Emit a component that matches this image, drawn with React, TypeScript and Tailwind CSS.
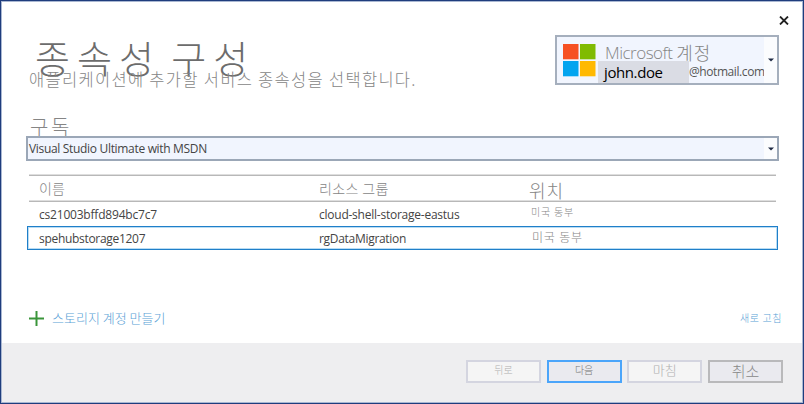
import type { ReactNode } from "react";

const ko = "font-['Noto_Sans_CJK_KR',sans-serif] font-light";
const latin = "font-['Open_Sans','Noto_Sans',sans-serif]";

function Caret() {
  return (
    <svg width="6" height="4" viewBox="0 0 6 4" className="block">
      <path d="M0 0.5H6L3 3.5Z" fill="#1f2a44" />
    </svg>
  );
}

function MicrosoftLogo() {
  return (
    <svg width="33" height="33" viewBox="0 0 33 33" className="block shrink-0">
      <rect width="15.5" height="15.3" fill="#f65022" />
      <rect x="17" width="15.5" height="15.3" fill="#80bb02" />
      <rect y="17" width="15.5" height="15.3" fill="#02a4ef" />
      <rect x="17" y="17" width="15.5" height="15.3" fill="#ffb902" />
    </svg>
  );
}

function AccountPicker() {
  return (
    <div className="flex h-[50px] w-[224px] border-2 border-[#a5afbd] bg-[#f1f5fe]">
      <div className="pt-[7px] pl-[6px]">
        <MicrosoftLogo />
      </div>
      <div className="flex w-[168px] shrink-0 flex-col pl-[2px]">
        <div className="flex h-[24px] items-end pl-[7px] whitespace-pre text-[#858585]">
          <span className={`${latin} h-[23px] text-[17px] font-light leading-[30px] tracking-[-0.5px]`}>Microsoft </span>
          <span className={`${ko} h-[23px] text-[18px] leading-[28px] tracking-[0.8px]`}>계정</span>
        </div>
        <div className="flex h-[22px]">
          <div className={`${latin} w-[91px] shrink-0 bg-[#dadce4] pl-[6px] text-[15px] leading-[23px] tracking-[-0.4px] text-black`}>
            john.doe
          </div>
          <div className={`${latin} text-[12px] leading-[21px] tracking-[-0.42px] text-[#555]`}>@hotmail.com</div>
        </div>
      </div>
      <div className="flex flex-1 items-center justify-center bg-[#fbfcfe]">
        <Caret />
      </div>
    </div>
  );
}

function FooterButton({ children, className }: { children: ReactNode; className: string }) {
  return (
    <button type="button" className={`${ko} h-[23px] w-[75px] border-2 whitespace-nowrap ${className}`}>
      {children}
    </button>
  );
}

export default function App() {
  return (
    <div className="h-[404px] w-[804px] border border-[#1f3d7d]">
      <div className="flex h-full flex-col border border-[#a9b7d2] bg-white">
        <header className="flex h-[114px] justify-between pr-[13px] pl-[27px]">
          <div className="pt-[26px]">
            <h1 className={`${ko} h-[42px] pl-[6px] text-[38px] leading-[57px] tracking-[7px] [word-spacing:-5px] whitespace-nowrap text-[#6c6c6c]`}>
              종속성 구성
            </h1>
            <p className={`${ko} text-[16.5px] leading-[18px] tracking-[1.3px] whitespace-nowrap text-[#858585]`}>
              애플리케이션에 추가할 서비스 종속성을 선택합니다.
            </p>
          </div>
          <div className="flex flex-col items-end pt-[14px]">
            <button type="button" aria-label="Close" className="block">
              <svg width="10" height="9" viewBox="0 0 10 9" className="block">
                <path d="M1 0.5L9 8.5M9 0.5L1 8.5" stroke="#222" strokeWidth="1.8" />
              </svg>
            </button>
            <div className="mt-[10px] mr-[10px]">
              <AccountPicker />
            </div>
          </div>
        </header>

        <main className="flex h-[227px] shrink-0 flex-col pr-[20px] pl-[24px]">
          <label className={`${ko} h-[20px] pl-[4px] text-[20px] leading-[22px] tracking-[2.5px] text-[#858585]`}>구독</label>
          <div className="flex h-[25px] w-[753px] shrink-0 border-2 border-[#9ba7b7] bg-[#f1f5fe]">
            <span className={`${latin} flex-1 pl-[1px] text-[12px] leading-[22px] tracking-[-0.32px] text-[#444]`}>
              Visual Studio Ultimate with MSDN
            </span>
            <span className="flex w-[13px] items-center justify-center bg-[#fbfcfe]">
              <Caret />
            </span>
          </div>

          <section className="mt-[13px] flex flex-col">
            <div className="ml-[3px] h-[28px] w-[747px] border-y border-t-[#dedede] border-b-[#b8b8b8]">
              <div className="grid h-full grid-cols-[280px_210px_1fr] border-y border-t-[#b8b8b8] border-b-[#dedede] pl-[10px]">
                <span className={`${ko} text-[14px] leading-[24px] text-[#858585]`}>이름</span>
                <span className={`${ko} text-[14px] leading-[24px] tracking-[0.4px] text-[#858585]`}>리소스 그룹</span>
                <span className={`${ko} text-[18px] leading-[28px] tracking-[1px] text-[#858585]`}>위치</span>
              </div>
            </div>
            <div className={`${latin} ml-[3px] grid h-[24px] w-[747px] grid-cols-[280px_210px_1fr] pl-[10px] text-[12px] leading-[25px] tracking-[-0.2px] text-[#444]`}>
              <span>cs21003bffd894bc7c7</span>
              <span className="tracking-[-0.24px]">cloud-shell-storage-eastus</span>
              <span className={`${ko} pl-[2px] text-[10px] leading-[20px] tracking-[0.8px] text-[#858585]`}>미국 동부</span>
            </div>
            <div className="ml-[1px] h-[24px] w-[751px] border border-[#1f7fc9]">
              <div className={`${latin} grid h-full grid-cols-[280px_210px_1fr] border border-[#b9dcf3] pl-[10px] text-[12px] leading-[22px] tracking-[-0.3px] text-[#444]`}>
                <span>spehubstorage1207</span>
                <span>rgDataMigration</span>
                <span className={`${ko} pl-[3px] text-[12px] leading-[18px] tracking-[0.8px] text-[#858585]`}>미국 동부</span>
              </div>
            </div>
          </section>

          <div className="mt-[57px] flex h-[22px] items-center justify-between pl-[3px]">
            <button type="button" className="flex items-center gap-[8px]">
              <svg width="15" height="15" viewBox="0 0 15 15" className="block">
                <path d="M7.5 0V15M0 7.5H15" stroke="#3a953a" strokeWidth="2" />
              </svg>
              <span className={`${ko} text-[13px] leading-[22px] text-[#5a9fd6]`}>스토리지 계정 만들기</span>
            </button>
            <button type="button" className={`${ko} text-[10px] leading-[22px] tracking-[0.6px] text-[#5a9fd6]`}>
              새로 고침
            </button>
          </div>
        </main>

        <footer className="flex min-h-0 flex-1 justify-end gap-[5.7px] bg-[#eeeef0] pt-[17px] pr-[19px]">
          <FooterButton className="border-[#d4d5e0] bg-[#f5f5f5] pb-[4px] text-[10px] leading-[15px] text-[#b0b0b0]">뒤로</FooterButton>
          <FooterButton className="border-[#4ba5fa] bg-[#eaeaef] pb-[4px] text-[10px] leading-[15px] text-[#777777]">다음</FooterButton>
          <FooterButton className="border-[#d4d5e0] bg-[#f5f5f5] pb-[3px] text-[13px] leading-[16px] text-[#b0b0b0]">마침</FooterButton>
          <FooterButton className="border-[#b9b9bb] bg-[#eaeaef] pb-[1px] text-[15px] leading-[18px] text-[#888888]">취소</FooterButton>
        </footer>
      </div>
    </div>
  );
}
